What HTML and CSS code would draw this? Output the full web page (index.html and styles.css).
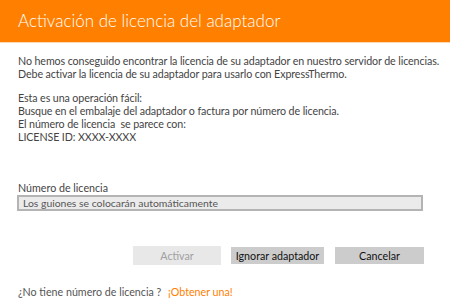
FILE: index.html
```html
<!DOCTYPE html>
<html lang="es">
<head>
  <meta charset="UTF-8">
  <title>Activación de licencia del adaptador</title>
  <link rel="stylesheet" href="styles.css">
</head>
<body>
  <div class="dialog-header">
    <h1>Activación de licencia del adaptador</h1>
  </div>

  <div class="dialog-body">
    <p class="info">No hemos conseguido encontrar la licencia de su adaptador en nuestro servidor de licencias.<br>
    Debe activar la licencia de su adaptador para usarlo con ExpressThermo.</p>

    <p class="info">Esta es una operación fácil:<br>
    Busque en el embalaje del adaptador o factura por número de licencia.<br>
    El número de licencia&nbsp; se parece con:<br>
    LICENSE ID: XXXX-XXXX</p>

    <label class="field-label" for="license">Número de licencia</label>
    <input id="license" class="license-input" type="text" placeholder="Los guiones se colocarán automáticamente">

    <div class="buttons">
      <button class="btn btn-disabled" disabled>Activar</button>
      <button class="btn btn-ignore">Ignorar adaptador</button>
      <button class="btn btn-cancel">Cancelar</button>
    </div>

    <div class="footer">
      ¿No tiene número de licencia ? <a href="#" class="get-link">¡Obtener una!</a>
    </div>
  </div>
</body>
</html>
```

FILE: styles.css
```css
body {
  margin: 0;
  padding: 0;
  background: #ffffff;
  font-family: Lato, "Open Sans", sans-serif;
  font-size: 10.7px;
  color: #444444;
}
.dialog-header {
  background-color: #ff8000;
  height: 43px;
  border-bottom: 1px solid #ffd9b3;
  display: flex;
  align-items: center;
  padding-left: 18px;
  padding-bottom: 2px;
  box-sizing: border-box;
}
h1 {
  margin: 0;
  color: #ffffff;
  font-size: 17px;
  font-weight: 300;
}
.dialog-body {
  padding: 11px 26px 0 18px;
}
.info {
  margin: 0 0 11px 0;
  line-height: 13px;
  letter-spacing: -0.1px;
  white-space: nowrap;
}
.field-label {
  display: block;
  margin-top: 38px;
  line-height: 13px;
}
.license-input {
  display: block;
  box-sizing: border-box;
  width: 100%;
  height: 16px;
  margin: 1px 0 0 -1px;
  padding: 0 4px;
  border: 2px solid #b4b4b4;
  background: #ebebeb;
  font-family: inherit;
  font-size: 10.4px;
  color: #444444;
}
.license-input::placeholder {
  color: #555555;
}
.buttons {
  display: flex;
  justify-content: flex-end;
  align-items: center;
  gap: 10px;
  margin-top: 35px;
}
.btn {
  border: none;
  font-family: inherit;
  font-size: 10.7px;
  padding: 0;
  height: 17px;
  white-space: nowrap;
}
.btn-disabled {
  width: 88px;
  height: 19px;
  background: #e8e8e8;
  color: #a0a0a0;
}
.btn-ignore {
  width: 93px;
  background: #cccccc;
  color: #111111;
}
.btn-cancel {
  width: 89px;
  margin-left: 1px;
  background: #cccccc;
  color: #111111;
}
.footer {
  margin-top: 20px;
  color: #555555;
}
.get-link {
  color: #ff8000;
  text-decoration: none;
  margin-left: 4px;
}
```
